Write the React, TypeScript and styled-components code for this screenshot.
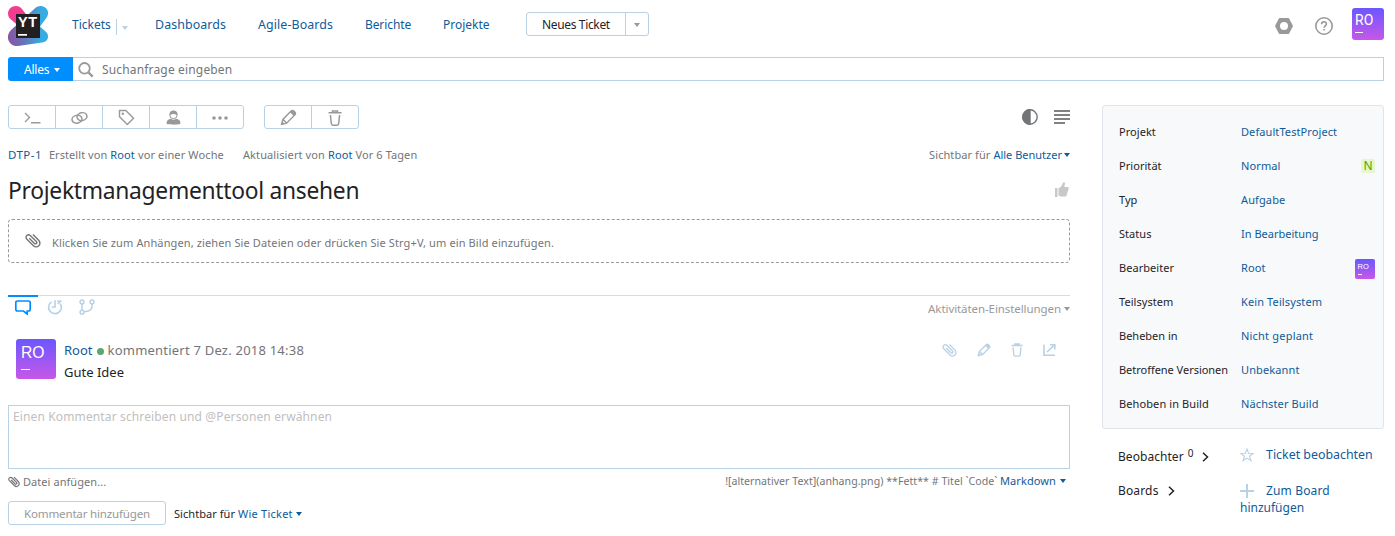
import React from "react";
import styled, { createGlobalStyle } from "styled-components";

const LINK = "#0f5b99";
const BORDER = "#b8d1e5";
const GRAY = "#737577";
const ICON = "#999";

const Global = createGlobalStyle`
  * { box-sizing: border-box; }
  body { margin: 0; background: #fff; font-family: "Noto Sans", "Open Sans", sans-serif; color: #1f2326; }
  svg { display: block; flex: none; }
`;

const Text = styled.span<{ $size?: number; $ls?: number; $color?: string }>`
  font-size: ${(p) => p.$size ?? 11}px;
  letter-spacing: ${(p) => p.$ls ?? 0}px;
  color: ${(p) => p.$color ?? "#1f2326"};
  line-height: 16px;
  white-space: pre;
`;

const Page = styled.div`
  width: 1395px;
  height: 536px;
  padding: 0 11px 0 8px;
  overflow: hidden;
`;

const Header = styled.header`
  display: flex;
  height: 57px;
  padding-top: 6px;
  align-items: flex-start;
`;

const Nav = styled.nav`
  display: flex;
  align-items: center;
  height: 36px;
  margin-left: 24px;
`;

const NavItem = styled.div<{ $w: number }>`
  width: ${(p) => p.$w}px;
  display: flex;
  align-items: center;
  padding-top: 2px;
`;

const NavDivider = styled.div`
  width: 1px;
  height: 16px;
  margin: 3px 5px 0 5px;
  background: ${BORDER};
`;

const Caret = styled.i<{ $color: string; $ml?: number; $mt?: number; $half?: number }>`
  display: inline-block;
  flex: none;
  width: 0;
  margin-left: ${(p) => p.$ml ?? 0}px;
  margin-top: ${(p) => p.$mt ?? 0}px;
  border-left: 3px solid transparent;
  border-right: 3px solid transparent;
  border-top: 4px solid ${(p) => p.$color};
`;

const SplitButton = styled.div`
  display: flex;
  width: 123px;
  height: 24px;
  border: 1px solid ${BORDER};
  border-radius: 3px;
`;

const SplitMain = styled.div`
  display: flex;
  align-items: center;
  width: 99px;
  padding: 2px 0 0 15px;
  border-right: 1px solid ${BORDER};
`;

const SplitArrow = styled.div`
  flex: 1;
  display: flex;
  align-items: center;
  justify-content: center;
  padding-top: 1px;
`;

const HeaderTools = styled.div`
  margin-left: auto;
  display: flex;
  align-items: flex-start;
  padding-top: 2px;
`;

const ToolSlot = styled.div<{ $w: number }>`
  width: ${(p) => p.$w}px;
  padding-top: 9px;
`;

const AvatarBox = styled.div<{ $size: number }>`
  flex: none;
  width: ${(p) => p.$size}px;
  height: ${(p) => p.$size}px;
  border-radius: ${(p) => (p.$size > 20 ? 3 : 2)}px;
  background: linear-gradient(#6b57ff, #c757e8);
  color: #fff;
  font-family: ${(p) => (p.$size === 32 ? "Roboto" : '"Liberation Sans"')}, sans-serif;
  overflow: hidden;
`;

const Initials = styled.div<{ $size: number; $pt: number; $pl: number }>`
  font-size: ${(p) => p.$size}px;
  line-height: ${(p) => p.$size}px;
  padding: ${(p) => p.$pt}px 0 0 ${(p) => p.$pl}px;
`;

const Dash = styled.div<{ $w: number; $mt: number; $ml: number }>`
  width: ${(p) => p.$w}px;
  height: 1px;
  margin: ${(p) => p.$mt}px 0 0 ${(p) => p.$ml}px;
  background: #fff;
`;

const SearchBar = styled.div`
  display: flex;
  height: 24px;
`;

const Scope = styled.div`
  display: flex;
  align-items: center;
  width: 65px;
  padding: 1px 0 0 16px;
  border-radius: 3px 0 0 3px;
  background: #008eff;
`;

const SearchInput = styled.div`
  flex: 1;
  display: flex;
  align-items: center;
  gap: 8px;
  padding: 1px 0 0 5px;
  border: 1px solid ${BORDER};
  border-left: 0;
`;

const Columns = styled.div`
  display: flex;
  justify-content: space-between;
  padding-top: 24px;
`;

const Main = styled.main`
  width: 1062px;
`;

const Row = styled.div<{ $h: number; $mt?: number }>`
  display: flex;
  align-items: center;
  height: ${(p) => p.$h}px;
  margin-top: ${(p) => p.$mt ?? 0}px;
`;

const Spacer = styled.div<{ $w?: number }>`
  ${(p) => (p.$w === undefined ? "flex: 1;" : `width: ${p.$w}px;`)}
`;

const ButtonGroup = styled.div`
  display: flex;
  height: 24px;
  margin-right: 20px;
  border: 1px solid ${BORDER};
  border-radius: 3px;
`;

const GroupButton = styled.div`
  width: 46px;
  display: flex;
  align-items: center;
  justify-content: center;
  padding-top: 1px;
  & + & {
    width: 47px;
    border-left: 1px solid ${BORDER};
  }
`;

const VoteSlot = styled.div`
  margin: 0 1px 3px auto;
`;

const DropZone = styled.div`
  height: 44px;
  margin-top: 2px;
  display: flex;
  align-items: center;
  padding: 3px 0 0 16px;
  gap: 11px;
  border: 1px dashed #999;
  border-radius: 4px;
`;

const ClipSlot = styled.div`
  margin-top: -4px;
`;

const Tabs = styled.div`
  display: flex;
  align-items: flex-start;
  height: 27px;
  margin-top: 32px;
  border-top: 1px solid #cddfec;
`;

const Tab = styled.div<{ $active?: boolean; $w: number }>`
  width: ${(p) => p.$w}px;
  margin-top: -1px;
  padding-top: 2px;
  display: flex;
  justify-content: center;
  border-top: 2px solid ${(p) => (p.$active ? "#008eff" : "transparent")};
`;

const TabSettings = styled.div`
  margin-left: auto;
  padding-top: 5px;
  display: flex;
  align-items: center;
`;

const Comment = styled.article`
  display: flex;
  margin: 17px 0 0 8px;
  height: 66px;
`;

const CommentBody = styled.div`
  margin-left: 8px;
  flex: 1;
`;

const Online = styled.i`
  width: 7px;
  height: 7px;
  border-radius: 50%;
  margin: 3px 4px 0 4px;
  background: #59a869;
`;

const CommentTools = styled.div`
  margin-left: auto;
  margin-right: 14px;
  display: flex;
  gap: 20px;
`;

const Editor = styled.div`
  display: flex;
  align-items: flex-start;
  height: 64px;
  padding: 3px 4px;
  border: 1px solid ${BORDER};
`;

const MarkdownHint = styled.div`
  display: flex;
  align-items: center;
  margin: -2px 4px 0 auto;
`;

const GhostButton = styled.div`
  display: flex;
  align-items: center;
  width: 158px;
  height: 24px;
  padding: 1px 0 0 15px;
  margin-right: 8px;
  border: 1px solid ${BORDER};
  border-radius: 3px;
`;

const Visibility = styled.div`
  display: flex;
  align-items: center;
  padding-top: 2px;
`;

const Side = styled.aside`
  width: 282px;
`;

const Fields = styled.section`
  height: 324px;
  padding: 9px 8px 0 16px;
  border: 1px solid #dfe5eb;
  border-radius: 3px;
  background: #f7f9fa;
`;

const Field = styled.div`
  display: flex;
  align-items: center;
  height: 34px;
`;

const FieldName = styled.div`
  width: 122px;
  flex: none;
  display: flex;
`;

const FieldValue = styled.div`
  flex: 1;
  display: flex;
  align-items: center;
  justify-content: space-between;
`;

const PriorityMark = styled.div`
  width: 14px;
  height: 14px;
  display: flex;
  align-items: center;
  justify-content: center;
  border-radius: 2px;
  background: #e6f6cf;
`;

const FieldAvatar = styled.div`
  padding-top: 2px;
`;

const SideSection = styled.section<{ $mt: number }>`
  display: flex;
  align-items: flex-start;
  margin-top: ${(p) => p.$mt}px;
  padding-left: 16px;
`;

const SideLabel = styled.div<{ $pt: number }>`
  width: 122px;
  flex: none;
  display: flex;
  padding-top: ${(p) => p.$pt}px;
`;

const Count = styled.sup`
  margin: -3px 9px 0 4px;
  font-size: 10px;
  line-height: 14px;
`;

const ChevronSlot = styled.div<{ $ml: number }>`
  margin: 3px 0 0 ${(p) => p.$ml}px;
`;

const SideAction = styled.div`
  display: flex;
  flex-direction: column;
`;

const ActionLine = styled.div`
  display: flex;
  align-items: center;
  height: 17px;
`;

const ActionIcon = styled.div`
  width: 26px;
`;

const Logo = () => (
  <svg width="40" height="40" viewBox="0 0 40 40">
    <defs>
      <linearGradient id="lg" x1="0" y1="0" x2="1" y2="0">
        <stop offset="0" stopColor="#8a56a3" />
        <stop offset=".35" stopColor="#6a6fb8" />
        <stop offset=".85" stopColor="#35ade2" />
      </linearGradient>
      <linearGradient id="pk" x1="0" y1="0" x2="1" y2="1">
        <stop offset=".3" stopColor="#f23c8e" />
        <stop offset="1" stopColor="#a34fa3" />
      </linearGradient>
    </defs>
    <path d="M8 0C3.500 0 0 3.500 0 7.500C0 10 1 12 3 13.500L20 28L27 20L14 3C12.500 1 10.500 0 8 0Z" fill="url(#pk)" />
    <path d="M38 12.500C41 8.500 40.500 4 37.500 1.800C34-.8 29.500-.4 26.500 2.800L3 24C-1 28-1 34 2.500 37.500C4.500 39.500 7 40.300 10 40L34 36.500C38 36 40 33.500 40 30.500C40 28 39 26.500 37 25L32 20.500Z" fill="url(#lg)" />
    <rect x="8" y="8" width="24" height="24" fill="#231f20" />
    <text x="10" y="21" fontFamily="Liberation Sans, sans-serif" fontWeight="700" fontSize="14.500" letterSpacing=".6" fill="#fff">YT</text>
    <rect x="10" y="28" width="9" height="1.700" fill="#fff" />
  </svg>
);

const Svg = ({ w, h, vb, c = ICON, sw = 1.4, children }: { w: number; h: number; vb?: string; c?: string; sw?: number; children: React.ReactNode }) => (
  <svg width={w} height={h} viewBox={vb ?? `0 0 ${w} ${h}`} fill="none" stroke={c} strokeWidth={sw}>
    {children}
  </svg>
);

const Clip = ({ size = 16, c = GRAY, sw = 1.4 }: { size?: number; c?: string; sw?: number }) => (
  <Svg w={size} h={size} vb="0 0 16 16" c={c} sw={sw}>
    <path d="M8 1.600L13.700 7.300C15.300 8.900 15.300 11.400 13.800 12.800C12.400 14.200 10 14.200 8.400 12.700L1.900 6.200C.8 5.100.8 3.600 1.800 2.600C2.800 1.600 4.400 1.600 5.500 2.700L11.300 8.500C11.900 9.100 11.900 10 11.400 10.500C10.800 11.100 10 11 9.400 10.400L4.300 5.300" />
  </Svg>
);

const Pencil = ({ size = 17, c = ICON, sw = 1.5 }: { size?: number; c?: string; sw?: number }) => (
  <Svg w={size} h={size} vb="0 0 18 18" c={c} sw={sw}>
    <path d="M1.700 16.300L3 11L11.800 2.200C12.600 1.400 13.700 1.400 14.500 2.200L15.800 3.500C16.600 4.300 16.600 5.400 15.800 6.200L7 15Z M3.200 11L7 14.800" />
    <path d="M10.500 3.400L14.600 7.500L16.300 5.800C17 5 17 4 16.300 3.300L14.700 1.700C14 1 13 1 12.200 1.700Z" fill={c} stroke="none" />
    <path d="M1 17L2.200 13L5 15.800Z" fill={c} stroke="none" />
  </Svg>
);

const Trash = ({ w = 14, h = 16, c = ICON, sw = 1.5 }: { w?: number; h?: number; c?: string; sw?: number }) => (
  <Svg w={w} h={h} vb="0 0 14 16" c={c} sw={sw}>
    <path d="M.5 2.800H13.500M4.500 2.500V1H9.500V2.500M2.400 5L3.300 13.500C3.400 14.600 4 15.200 5 15.200H9C10 15.200 10.600 14.600 10.700 13.500L11.600 5" />
  </Svg>
);

const Chevron = () => (
  <Svg w={7} h={10} c="#1f2326" sw={1.5}>
    <path d="M1 .8L5.500 5L1 9.200" />
  </Svg>
);

const Avatar = ({ size }: { size: 20 | 32 | 40 }) => {
  const dims = {
    20: { f: 7.5, pt: 4, pl: 2.5, w: 4, mt: 3.5 },
    32: { f: 14, pt: 5, pl: 3, w: 8, mt: 5 },
    40: { f: 15.7, pt: 6, pl: 5, w: 9, mt: 8.3 },
  }[size];
  return (
    <AvatarBox $size={size}>
      <Initials $size={dims.f} $pt={dims.pt} $pl={dims.pl}>RO</Initials>
      <Dash $w={dims.w} $mt={dims.mt} $ml={Math.ceil(dims.pl)} />
    </AvatarBox>
  );
};

const fields: { name: string; value: string; nameLs?: number; valueLs?: number }[] = [
  { name: "Projekt", value: "DefaultTestProject", valueLs: 0.09 },
  { name: "Priorität", value: "Normal" },
  { name: "Typ", value: "Aufgabe" },
  { name: "Status", value: "In Bearbeitung", valueLs: 0 },
  { name: "Bearbeiter", value: "Root" },
  { name: "Teilsystem", value: "Kein Teilsystem" },
  { name: "Beheben in", value: "Nicht geplant", nameLs: 0, valueLs: 0.2 },
  { name: "Betroffene Versionen", value: "Unbekannt", nameLs: -0.03 },
  { name: "Behoben in Build", value: "Nächster Build", nameLs: 0.1 },
];

export default function App() {
  return (
    <>
      <Global />
      <Page>
        <Header>
          <Logo />
          <Nav>
            <NavItem $w={83}>
              <Text $size={12} $color={LINK}>Tickets</Text>
              <NavDivider />
              <Caret $color={BORDER} $mt={5} />
            </NavItem>
            <NavItem $w={103}><Text $size={12.4} $ls={0.1} $color={LINK}>Dashboards</Text></NavItem>
            <NavItem $w={107}><Text $size={12.4} $ls={0.1} $color={LINK}>Agile-Boards</Text></NavItem>
            <NavItem $w={78}><Text $size={12} $ls={-0.1} $color={LINK}>Berichte</Text></NavItem>
            <NavItem $w={83}><Text $size={12} $color={LINK}>Projekte</Text></NavItem>
            <SplitButton>
              <SplitMain><Text $size={12} $ls={-0.35}>Neues Ticket</Text></SplitMain>
              <SplitArrow><Caret $color={ICON} /></SplitArrow>
            </SplitButton>
          </Nav>
          <HeaderTools>
            <ToolSlot $w={40}>
              <Svg w={18} h={18} c="none">
                <path fillRule="evenodd" fill={ICON} d="M4.800 1H13.200Q13.800 1 14.100 1.500L17.700 8.300Q18 9 17.700 9.700L14.100 16.500Q13.800 17 13.200 17H4.800Q4.200 17 3.900 16.500L.3 9.700Q0 9 .3 8.300L3.900 1.500Q4.200 1 4.800 1ZM9 5A4 4 0 1 0 9 13A4 4 0 1 0 9 5Z" />
              </Svg>
            </ToolSlot>
            <ToolSlot $w={37}>
              <Svg w={18} h={18} sw={1.6}>
                <circle cx="9" cy="9" r="8.200" />
                <path d="M6.600 7.200C6.600 5.600 7.600 4.800 9 4.800C10.500 4.800 11.400 5.700 11.400 6.900C11.400 8.800 9.100 8.800 9.100 10.700M9.100 11.900V13.600" />
              </Svg>
            </ToolSlot>
            <Avatar size={32} />
          </HeaderTools>
        </Header>

        <SearchBar>
          <Scope>
            <Text $size={12} $ls={-0.2} $color="#fff">Alles</Text>
            <Caret $color="#fff" $ml={5} />
          </Scope>
          <SearchInput>
            <Svg w={16} h={16} sw={1.8}>
              <circle cx="6.500" cy="6.300" r="5.300" />
              <path d="M10.500 10.500L14.700 14.700" strokeWidth="2.400" />
            </Svg>
            <Text $size={12} $ls={0.16} $color={GRAY}>Suchanfrage eingeben</Text>
          </SearchInput>
        </SearchBar>

        <Columns>
          <Main>
            <Row $h={24}>
              <ButtonGroup>
                <GroupButton>
                  <Svg w={17} h={12}><path d="M1 1L5.500 5.500L1 10M7 10.800H16.500" /></Svg>
                </GroupButton>
                <GroupButton>
                  <Svg w={17} h={14} sw={1.5}>
                    <ellipse cx="6" cy="8.200" rx="5" ry="3.900" transform="rotate(-12 6 8.200)" />
                    <ellipse cx="11" cy="5.600" rx="5" ry="3.900" transform="rotate(-12 11 5.600)" />
                  </Svg>
                </GroupButton>
                <GroupButton>
                  <Svg w={17} h={17}>
                    <path d="M1.500 1.500H7.800L15.600 9.300L9.300 15.600L1.500 7.800Z" strokeLinejoin="round" />
                    <circle cx="4.800" cy="4.800" r="1.200" fill={ICON} stroke="none" />
                  </Svg>
                </GroupButton>
                <GroupButton>
                  <Svg w={15} h={16} sw={1}>
                    <path d="M3.500 3.800C4 1.200 5.500.4 7.500.4S11 1.200 11.500 3.800L10.800 5C9 3.500 6 3.500 4.200 5Z" fill={ICON} stroke="none" />
                    <circle cx="7.500" cy="5" r="3.700" />
                    <path d="M.5 13.500C.5 10.500 2.500 9 5 8.800C6.500 10.200 8.500 10.200 10 8.800C12.500 9 14.500 10.500 14.500 13.500C14.500 15 .5 15 .5 13.500Z" fill={ICON} stroke="none" />
                  </Svg>
                </GroupButton>
                <GroupButton>
                  <Svg w={16} h={4} c="none">
                    <g fill={ICON}><circle cx="2" cy="2" r="1.800" /><circle cx="8" cy="2" r="1.800" /><circle cx="14" cy="2" r="1.800" /></g>
                  </Svg>
                </GroupButton>
              </ButtonGroup>
              <ButtonGroup>
                <GroupButton><Pencil /></GroupButton>
                <GroupButton><Trash /></GroupButton>
              </ButtonGroup>
              <Spacer />
              <Svg w={16} h={16} c={GRAY}>
                <circle cx="8" cy="8" r="7.200" />
                <path d="M8 .8A7.200 7.200 0 0 0 8 15.200Z" fill={GRAY} />
              </Svg>
              <Spacer $w={16} />
              <Svg w={16} h={14} c="#808284" sw={2}>
                <path d="M0 1H16M0 5H16M0 9H16M0 13H11" />
              </Svg>
            </Row>

            <Row $h={20} $mt={16}>
              <Text $size={11.5} $ls={0.45} $color={LINK}>DTP-1</Text>
              <Spacer $w={7} />
              <Text $color={GRAY} $ls={0.06}>Erstellt von </Text>
              <Text $color={LINK} $ls={0.15}>Root</Text>
              <Text $color={GRAY} $ls={0.13}> vor einer Woche</Text>
              <Spacer $w={19} />
              <Text $color={GRAY} $ls={0.11}>Aktualisiert von </Text>
              <Text $color={LINK} $ls={0.15}>Root</Text>
              <Text $color={GRAY} $ls={0.08}> Vor 6 Tagen</Text>
              <Spacer />
              <Text $color={GRAY} $ls={0.08}>Sichtbar für </Text>
              <Text $color={LINK}>Alle Benutzer</Text>
              <Caret $color={LINK} $ml={2} />
            </Row>

            <Row $h={52}>
              <Text $size={22.8} $ls={-0.28}>Projektmanagementtool ansehen</Text>
              <VoteSlot>
                <Svg w={15} h={15} c="none">
                  <path fill="#c8c8c8" d="M1 6H3.500V15H1ZM4.500 6.500L7.500 4L9 .8C9.300 0 11 0 11 1.800L10.300 5H13.500C14.800 5 15 6.300 14.500 7.300L12.700 13C12.400 14 11.800 14.500 11 14.500H6.500L4.500 13.500Z" />
                </Svg>
              </VoteSlot>
            </Row>

            <DropZone>
              <ClipSlot><Clip /></ClipSlot>
              <Text $color={GRAY} $ls={0.115}>Klicken Sie zum Anhängen, ziehen Sie Dateien oder drücken Sie Strg+V, um ein Bild einzufügen.</Text>
            </DropZone>

            <Tabs>
              <Tab $active $w={30}>
                <Svg w={18} h={16} c="#008eff" sw={1.7}>
                  <path d="M3.500 2H14.500Q16.200 2 16.200 3.700V10.300Q16.200 12 14.500 12H13.200V15L9.500 12H3.500Q1.800 12 1.800 10.300V3.700Q1.800 2 3.500 2Z" />
                </Svg>
              </Tab>
              <Tab $w={34}>
                <Svg w={16} h={16} c={BORDER} sw={1.6}>
                  <path d="M4.500 2.800A6.400 6.400 0 1 0 13.200 4.500M8 1.200V8H4.800" />
                  <path d="M10 2.200H14.500M14 1.500L10.800 5" />
                </Svg>
              </Tab>
              <Tab $w={30}>
                <Svg w={16} h={16} c={BORDER} sw={1.5}>
                  <circle cx="3" cy="3" r="1.900" /><circle cx="3" cy="13.200" r="1.900" /><circle cx="13" cy="3" r="1.900" />
                  <path d="M3 5V11.300M13 5V7.500C13 10.500 10 12.500 5 12.800" />
                </Svg>
              </Tab>
              <TabSettings>
                <Text $size={11.5} $ls={-0.08} $color={ICON}>Aktivitäten-Einstellungen</Text>
                <Caret $color={ICON} $ml={3} />
              </TabSettings>
            </Tabs>

            <Comment>
              <Avatar size={40} />
              <CommentBody>
                <Row $h={22}>
                  <Text $size={13} $color={LINK}>Root</Text>
                  <Online />
                  <Text $size={13} $ls={0.22} $color={GRAY}>kommentiert 7 Dez. 2018 14:38</Text>
                  <CommentTools>
                    <Clip size={15} c={BORDER} />
                    <Pencil size={14} c={BORDER} sw={1.7} />
                    <Trash w={12} h={14} c={BORDER} sw={1.6} />
                    <Svg w={13} h={14} c={BORDER} sw={1.6}>
                      <path d="M1 1.500V12.200H12M4 9L10.500 2.800M7 1.800H11.800V6.500" />
                    </Svg>
                  </CommentTools>
                </Row>
                <Row $h={22}><Text $size={13}>Gute Idee</Text></Row>
              </CommentBody>
            </Comment>

            <Editor><Text $size={12} $ls={0.13} $color="#c0c0c0">Einen Kommentar schreiben und @Personen erwähnen</Text></Editor>

            <Row $h={26}>
              <Clip size={12} sw={1.6} />
              <Spacer $w={3} />
              <Text $color={GRAY} $ls={0.06}>Datei anfügen...</Text>
              <MarkdownHint>
                <Text $size={10.6} $ls={0.03} $color={GRAY}>![alternativer Text](anhang.png) **Fett** # Titel `Code` </Text>
                <Text $ls={0.1} $color={LINK}>Markdown</Text>
                <Caret $color={LINK} $ml={4} />
              </MarkdownHint>
            </Row>
            <Row $h={24} $mt={6}>
              <GhostButton><Text $size={11.6} $ls={-0.2} $color={ICON}>Kommentar hinzufügen</Text></GhostButton>
              <Visibility>
                <Text $ls={0.05}>Sichtbar für </Text>
                <Text $ls={0.25} $color={LINK}>Wie Ticket</Text>
                <Caret $color={LINK} $ml={3} />
              </Visibility>
            </Row>
          </Main>

          <Side>
            <Fields>
              {fields.map(({ name, value, nameLs = 0.05, valueLs = 0.12 }) => (
                <Field key={name}>
                  <FieldName><Text $ls={nameLs}>{name}</Text></FieldName>
                  <FieldValue>
                    <Text $ls={valueLs} $color={LINK}>{value}</Text>
                    {name === "Priorität" && <PriorityMark><Text $size={12} $color="#4da400">N</Text></PriorityMark>}
                    {name === "Bearbeiter" && <FieldAvatar><Avatar size={20} /></FieldAvatar>}
                  </FieldValue>
                </Field>
              ))}
            </Fields>
            <SideSection $mt={17}>
              <SideLabel $pt={3}>
                <Text $size={12} $ls={0.05}>Beobachter</Text>
                <Count>0</Count>
                <ChevronSlot $ml={0}><Chevron /></ChevronSlot>
              </SideLabel>
              <SideAction>
                <ActionLine>
                  <ActionIcon>
                    <Svg w={14} h={14} c={BORDER} sw={1.1}>
                      <path d="M7 1L8.600 5.200L13.200 5.400L9.600 8.200L10.900 12.700L7 10.100L3.100 12.700L4.400 8.200L.8 5.400L5.400 5.200Z" />
                    </Svg>
                  </ActionIcon>
                  <Text $size={12.4} $color={LINK}>Ticket beobachten</Text>
                </ActionLine>
              </SideAction>
            </SideSection>
            <SideSection $mt={17}>
              <SideLabel $pt={1}>
                <Text $size={12} $ls={0.15}>Boards</Text>
                <ChevronSlot $ml={9}><Chevron /></ChevronSlot>
              </SideLabel>
              <SideAction>
                <ActionLine>
                  <ActionIcon><Svg w={14} h={14} c={BORDER} sw={2}><path d="M7 0V14M0 7H14" /></Svg></ActionIcon>
                  <Text $size={12} $ls={0.15} $color={LINK}>Zum Board</Text>
                </ActionLine>
                <ActionLine><Text $size={12} $color={LINK}>hinzufügen</Text></ActionLine>
              </SideAction>
            </SideSection>
          </Side>
        </Columns>
      </Page>
    </>
  );
}
